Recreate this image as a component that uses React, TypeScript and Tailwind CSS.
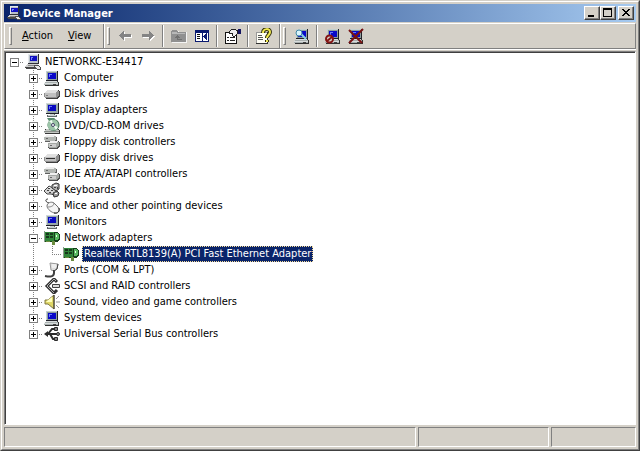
import React from "react";

type IconProps = { size?: number };

const Svg = ({ size = 16, children }: IconProps & { children: React.ReactNode }) => (
  <svg width={size} height={size} viewBox="0 0 16 16" className="block shrink-0" shapeRendering="crispEdges" aria-hidden="true">
    {children}
  </svg>
);

const ComputerShape = () => (
  <>
    <path d="M2 1h12v10H2z" fill="#202028" />
    <path d="M2 1h11v9H2z" fill="#8c9c9c" />
    <path d="M2 1h11v1H3v8H2z" fill="#c4d0d0" />
    <path d="M4 3h8v6H4z" fill="#0808c8" />
    <path d="M5 4h3v1H6v2H5z" fill="#6878f8" />
    <path d="M2 11h12v1h1v4H1v-1H0v-2h1v-1h1z" fill="#303030" />
    <path d="M2 11h11v1h1v3H0v-2h1v-1h1z" fill="#a8b0b0" />
    <path d="M2 11h11v1H2zM0 13h14v1H0z" fill="#d8dcdc" />
    <path d="M9 14h3v1H9z" fill="#404040" />
  </>
);

const ComputerIcon = ({ size }: IconProps) => (
  <Svg size={size}>
    <ComputerShape />
  </Svg>
);

const RootIcon = ({ size }: IconProps) => (
  <Svg size={size}>
    <path d="M3 0h11v10H3z" fill="#303038" />
    <path d="M3 0h10v9H3z" fill="#b8c0c8" />
    <path d="M3 0h10v1H4v8H3z" fill="#e4e8ec" />
    <path d="M5 2h7v5H5z" fill="#1010c0" />
    <path d="M6 3h2v1H7v2H6z" fill="#7888ff" />
    <path d="M2 10h11v1h1v4H1v-1H0v-2h1v-1h1z" fill="#484848" />
    <path d="M2 10h11v1h1v2H0v-1h1v-1h1z" fill="#d0d0d0" />
    <path d="M3 11h8v1H3z" fill="#888" />
    <path d="M9 11h4l3 3v2h-4l-3-3z" fill="#505050" />
    <path d="M10 12h3l2 2v1h-3l-2-2z" fill="#e8e8e8" />
  </Svg>
);

const MonitorIcon = () => (
  <Svg>
    <path d="M2 1h13v11H2z" fill="#202028" />
    <path d="M2 1h12v10H2z" fill="#98a8a8" />
    <path d="M2 1h12v1H3v9H2z" fill="#d0d8d8" />
    <path d="M4 3h8v6H4z" fill="#0808c0" />
    <path d="M5 4h3v1H6v2H5z" fill="#6878f8" />
    <path d="M6 12h5v1h2v2H3v-2h3z" fill="#606868" />
    <path d="M6 12h4v1h2v1H4v-1h2z" fill="#c8d0d0" />
  </Svg>
);

const DriveIcon = ({ floppy = false }: { floppy?: boolean }) => (
  <Svg>
    <path d="M3 4h12v1h1v6h-1v1h-1v1H2v-1H1v-5h1V5h1z" fill="#404040" />
    <path d="M3 4h11v1h1v5h-1v1h-1v1H1v-1H0V7h1V6h1V5h1z" fill="#909090" />
    <path d="M3 4h11v1h-1v1h-1v1H1V6h1V5h1z" fill="#e0e0e0" />
    <path d="M1 7h11v4H1z" fill="#c0c0c0" />
    {floppy ? <path d="M2 8h9v1H2z" fill="#303030" /> : <path d="M2 9h2v1H2z" fill="#808080" />}
  </Svg>
);

const ControllerIcon = () => (
  <Svg>
    <path d="M2 2h10v1h1v4h-1v1H1V7h1z" fill="#606060" />
    <path d="M2 1h9v1h1v4h-1v1H1V6H0V3h1V2h1z" fill="#b4b8b4" />
    <path d="M2 1h9v1h-1v1H1V2h1z" fill="#eee" />
    <path d="M6 7h9v1h1v5h-1v1h-1v1H5v-1H4V9h2z" fill="#505050" />
    <path d="M6 7h8v1h1v4h-1v1h-1v1H5v-1H4V9h1V8h1z" fill="#a4a8a4" />
    <path d="M6 7h8v1h-1v1H5V8h1z" fill="#f0f0f0" />
    <path d="M5 10h7v3H5z" fill="#ccc" />
    <path d="M2 4h2v1H2zM6 11h2v1H6z" fill="#666" />
  </Svg>
);

const DiscIcon = () => (
  <Svg>
    <path d="M1 11h13l2 2v3H1z" fill="#383838" />
    <path d="M2 11h11l2 2v2H0v-2z" fill="#c4c8c4" />
    <path d="M0 13h15v1H0z" fill="#8c908c" />
    <g shapeRendering="auto">
      <path d="M3 0h8l-2 3H5z" fill="#548a6c" />
      <circle cx="9.500" cy="7" r="6" fill="#3f6f53" />
      <circle cx="9" cy="7" r="5.500" fill="#9cc4a8" />
      <path d="M9 7L5 3l3-1zM9 7l5 2-2 3z" fill="#eefcf2" />
      <circle cx="9" cy="7" r="1.500" fill="#fff" stroke="#446" strokeWidth="1" />
    </g>
  </Svg>
);

const KeyboardIcon = () => (
  <Svg>
    <g shapeRendering="auto">
      <path d="M0 9l5-5 4 2 4 4-3 3-3-1-4 0z" fill="#d4d4d4" stroke="#444" />
      <path d="M8 3l4-2 3 1v5l-3 2-4-3z" fill="#b0b0b0" stroke="#333" />
      <path d="M9 11l4-2 2 2-1 3-4 1z" fill="#a0a0a0" stroke="#333" />
    </g>
    <path d="M4 6h2v1H4zM7 8h2v1H7zM3 8h2v1H3zM5 10h2v1H5z" fill="#404040" />
    <path d="M10 3h3v1h-3zM11 11h2v1h-2zM5 5h1v1H5z" fill="#fff" />
    <path d="M10 5h2v1h-2zM13 5h1v2h-1z" fill="#404040" />
  </Svg>
);

const MouseIcon = () => (
  <Svg>
    <g shapeRendering="auto">
      <path d="M5 5C1 4 1 1 4 1" fill="none" stroke="#333" />
      <path d="M3 8c0-3 4-5 7-3l4 4c2 3 1 6-3 6-3 0-8-4-8-7z" fill="#f4f4f4" stroke="#707070" />
      <path d="M4 9c3 0 6-1 6-4" fill="none" stroke="#888" />
      <path d="M15 10c1 3-1 6-5 5" fill="none" stroke="#222" />
    </g>
  </Svg>
);

const NetworkIcon = () => (
  <Svg>
    <path d="M1 2h13v10H1z" fill="#124c18" />
    <path d="M1 2h12v9H1z" fill="#2f8438" />
    <path d="M2 3h3v2H2zM2 6h3v2H2z" fill="#16351a" />
    <path d="M6 3h3v2H6zM6 6h3v2H6z" fill="#183c1c" />
    <path d="M10 2h4v1h1v1h1v6h-1v1h-1v1h-4z" fill="#163c1c" />
    <path d="M11 3h3v1h1v5h-1v1h-3z" fill="#58b860" />
    <path d="M12 5h1v2h-1z" fill="#e0ffe0" />
    <path d="M2 11h4v1H2zM8 11h3v4H8z" fill="#6c8c40" />
    <path d="M0 1h1v11H0z" fill="#8c9c8c" />
  </Svg>
);

const PortIcon = () => (
  <Svg>
    <g shapeRendering="auto">
      <path d="M6 1l8 1-1 5-3 2-3-1z" fill="#ddd" stroke="#999" />
      <path d="M8 3h4M8 5h4" stroke="#fff" />
      <path d="M10 8v3c0 4-4 4-9 3" fill="none" stroke="#404040" strokeWidth="2" />
      <path d="M14 2l-1 5-3 2" fill="none" stroke="#444" />
    </g>
  </Svg>
);

const ScsiIcon = () => (
  <Svg>
    <g shapeRendering="auto">
      <path d="M13 4l-3-3-7 7 7 7 3-3" fill="none" stroke="#303030" strokeWidth="3" />
      <path d="M12 3l-2-2-7 7 7 7" fill="none" stroke="#b0b0b0" />
      <path d="M8.500 6.500h7v3h-7z" fill="#ddd" stroke="#404040" />
    </g>
  </Svg>
);

const SoundIcon = () => (
  <Svg>
    <g shapeRendering="auto">
      <path d="M1 6h3l6-5v14l-6-5H1z" fill="#e0d868" stroke="#807840" />
      <path d="M4 6l4-3v5H2z" fill="#ffffbc" />
      <path d="M10 1v14" stroke="#333" />
      <path d="M12 5l3-3M12 8h4M12 11l3 3" stroke="#999" />
    </g>
  </Svg>
);

const UsbIcon = () => (
  <Svg>
    <g shapeRendering="auto">
      <path d="M2 8h11M4 8l4-5h4M6 8l3 5h3" fill="none" stroke="#2c2c2c" strokeWidth="2" />
      <path d="M0 8l4-3v6z" fill="#2c2c2c" />
      <path d="M10.500 1.500h3v3h-3zM10.500 11.500h3v3h-3z" fill="#888" stroke="#2c2c2c" />
      <circle cx="14" cy="8" r="1.500" fill="#888" stroke="#2c2c2c" />
    </g>
  </Svg>
);

const ArrowIcon = ({ right = false }: { right?: boolean }) => (
  <Svg>
    {right ? (
      <>
        <path d="M3 7h7V4h1v1h1v1h1v1h1v1h1v1h-1v1h-1v1h-1v1h-1v1h-1v-3H3z" fill="#fff" />
        <path d="M2 6h7V3h1v1h1v1h1v1h1v1h1v1h-1v1h-1v1h-1v1h-1v1H9V9H2z" fill="#848484" />
      </>
    ) : (
      <>
        <path d="M15 7H8V4H7v1H6v1H5v1H4v1H3v1h1v1h1v1h1v1h1v1h1v-3h7z" fill="#fff" />
        <path d="M14 6H7V3H6v1H5v1H4v1H3v1H2v1h1v1h1v1h1v1h1v1h1V9h7z" fill="#848484" />
      </>
    )}
  </Svg>
);

const FolderIcon = () => (
  <Svg>
    <path d="M1 4h1V3h5l1 1h8v11H1z" fill="#f4f4f4" />
    <path d="M0 3h1V2h5v1h1v1h8v10H0z" fill="#909090" />
    <path d="M1 4h5v1h8v1H1z" fill="#b8b8b8" />
    <path d="M6 7h1v1h1v1h1v1H7v1h4v1H6v-2H4V9h1V8h1z" fill="#707070" />
  </Svg>
);

const PaneIcon = () => (
  <Svg>
    <path d="M1 2h14v12H1z" fill="#0a1a70" />
    <path d="M2 5h6v8H2zM9 5h5v8H9z" fill="#fff" />
    <path d="M3 6h3v1H3zM3 8h3v1H3zM3 10h3v1H3z" fill="#111" />
    <path d="M13 5v7L9 9V8z" fill="#0a1a70" />
  </Svg>
);

const PropertiesIcon = () => (
  <Svg>
    <path d="M0 4h12v12H0z" fill="#111" />
    <path d="M1 5h10v10H1z" fill="#fff" />
    <path d="M2 9h2v1H2zM5 9h5v1H5zM2 12h2v1H2zM5 12h5v1H5z" fill="#222" />
    <path d="M4 3h1V2h1V1h5v1h2v4h-1v1h-1v1h-1v1H8V8H7V6H4z" fill="#222" />
    <path d="M5 3h1V2h5v1h1v3h-1v1h-1v1H8V5H5z" fill="#eee" />
    <path d="M13 1h3v5h-3z" fill="#141460" />
  </Svg>
);

const HelpIcon = () => (
  <Svg>
    <path d="M0 4h12v12H0z" fill="#333" />
    <path d="M0 4h11v11H0z" fill="#999" />
    <path d="M1 5h10v10H1z" fill="#fffef4" />
    <path d="M2 7h4v1H2zM2 9h5v1H2zM2 11h5v1H2z" fill="#555" />
    <g shapeRendering="auto">
      <path d="M7 5c0-5 7-5 7-1 0 3-3 3-3 6M11 12v2" fill="none" stroke="#33300c" strokeWidth="4" />
      <path d="M7 5c0-5 7-5 7-1 0 3-3 3-3 6M11 12v2" fill="none" stroke="#f0e850" strokeWidth="2" />
    </g>
  </Svg>
);

const ScanIcon = () => (
  <Svg>
    <ComputerShape />
    <g shapeRendering="auto">
      <path d="M7 6l5 5" stroke="#88d0e8" strokeWidth="2" />
      <circle cx="5" cy="5" r="3" fill="#d8f4fc" stroke="#4088a8" />
    </g>
  </Svg>
);

const DisableIcon = () => (
  <Svg>
    <ComputerShape />
    <g shapeRendering="auto">
      <circle cx="4.500" cy="11" r="3.500" fill="#d4d0c8" stroke="#841414" strokeWidth="2" />
      <path d="M2 13l5-4" stroke="#841414" strokeWidth="2" />
    </g>
  </Svg>
);

const UninstallIcon = () => (
  <Svg>
    <ComputerShape />
    <path d="M1 2l13 13M15 1L1 15" stroke="#781010" strokeWidth="2" shapeRendering="auto" />
  </Svg>
);

const devices = [
  { label: "Computer", icon: <ComputerIcon /> },
  { label: "Disk drives", icon: <DriveIcon /> },
  { label: "Display adapters", icon: <MonitorIcon /> },
  { label: "DVD/CD-ROM drives", icon: <DiscIcon /> },
  { label: "Floppy disk controllers", icon: <ControllerIcon /> },
  { label: "Floppy disk drives", icon: <DriveIcon floppy /> },
  { label: "IDE ATA/ATAPI controllers", icon: <ControllerIcon /> },
  { label: "Keyboards", icon: <KeyboardIcon /> },
  { label: "Mice and other pointing devices", icon: <MouseIcon /> },
  { label: "Monitors", icon: <MonitorIcon /> },
  {
    label: "Network adapters",
    icon: <NetworkIcon />,
    children: [{ label: "Realtek RTL8139(A) PCI Fast Ethernet Adapter", icon: <NetworkIcon /> }],
  },
  { label: "Ports (COM & LPT)", icon: <PortIcon /> },
  { label: "SCSI and RAID controllers", icon: <ScsiIcon /> },
  { label: "Sound, video and game controllers", icon: <SoundIcon /> },
  { label: "System devices", icon: <ComputerIcon /> },
  { label: "Universal Serial Bus controllers", icon: <UsbIcon /> },
];

// Dotted connector: "full" runs through the row, "half" stops at its middle
const Connector = ({ vertical, horizontal = true }: { vertical: "full" | "half" | "none"; horizontal?: boolean }) => (
  <svg width="19" height="16" viewBox="0 0 19 16" className="block" shapeRendering="crispEdges" aria-hidden="true">
    {vertical !== "none" && (
      <path d={vertical === "full" ? "M9.500 0v16" : "M9.500 0v9"} stroke="#808080" strokeDasharray="1 1" />
    )}
    {horizontal && <path d="M9 8.500h10" stroke="#808080" strokeDasharray="1 1" />}
  </svg>
);

const Expander = ({ open, label, vertical }: { open: boolean; label: string; vertical: "full" | "half" | "none" }) => (
  <span className="grid h-4 w-[19px] shrink-0 place-items-center *:[grid-area:1/1]">
    <Connector vertical={vertical} />
    <button type="button" aria-label={`${open ? "Collapse" : "Expand"} ${label}`} className="size-[9px] border border-[#808080] bg-white">
      <svg width="7" height="7" viewBox="0 0 7 7" className="block" shapeRendering="crispEdges" aria-hidden="true">
        <path d={open ? "M1 3h5v1H1z" : "M1 3h5v1H1zM3 1h1v5H3z"} fill="#000" />
      </svg>
    </button>
  </span>
);

const Label = ({ icon, selected = false, children }: { icon: React.ReactNode; selected?: boolean; children: React.ReactNode }) => (
  <>
    <span className="flex w-[19px] shrink-0 pl-px">{icon}</span>
    <span
      className={
        selected
          ? "ml-px h-4 whitespace-nowrap border border-dotted border-[#f5db95] bg-[#0a246a] px-px leading-[14px] text-white"
          : "whitespace-nowrap px-0.5 leading-4"
      }
    >
      {children}
    </span>
  </>
);

const ToolButton = ({ label, disabled, children }: { label: string; disabled?: boolean; children: React.ReactNode }) => (
  <button type="button" aria-label={label} disabled={disabled} className="flex h-[22px] w-[23px] items-center justify-center">
    {children}
  </button>
);

const Separator = () => <span className="mx-[3px] h-[22px] w-0.5 border-l border-[#808080] border-r border-r-white" />;

const Grip = () => <span className="h-[18px] w-[3px] border border-white border-r-[#808080] border-b-[#808080]" />;

const CaptionButton = ({ label, children }: { label: string; children: React.ReactNode }) => (
  <button
    type="button"
    aria-label={label}
    className="h-3.5 w-4 border border-white border-r-[#404040] border-b-[#404040] bg-[#d4d0c8] shadow-[inset_-1px_-1px_0_#808080]"
  >
    <svg width="14" height="12" viewBox="0 0 14 12" className="block" shapeRendering="crispEdges" aria-hidden="true">
      {children}
    </svg>
  </button>
);

export default function App() {
  return (
    <main className="flex min-h-screen flex-col border border-[#d4d0c8] border-r-[#404040] border-b-[#404040] bg-[#d4d0c8] font-['Tahoma','DejaVu_Sans_Condensed','DejaVu_Sans',sans-serif] text-[11px] text-black">
      <div className="flex grow flex-col border border-white border-r-[#808080] border-b-[#808080] p-0.5">
        <header className="flex h-[18px] items-center bg-linear-to-r from-[#0a246a] to-[#a6caf0] pr-0.5 pl-[3px]">
          <RootIcon size={14} />
          <h1 className="grow pt-0.5 pl-0.5 font-bold text-white">Device Manager</h1>
          <CaptionButton label="Minimize">
            <path d="M3 8h6v2H3z" />
          </CaptionButton>
          <CaptionButton label="Maximize">
            <path d="M2 1h9v9H2zM3 3v6h7V3z" fillRule="evenodd" />
          </CaptionButton>
          <span className="w-0.5" />
          <CaptionButton label="Close">
            <path d="M3 2h2v1h1v1h2V3h1V2h2v1h-1v1H9v1H8v1h1v1h1v1h1v1H9V8H8V7H6v1H5v1H3V8h1V7h1V6h1V5H5V4H4V3H3z" />
          </CaptionButton>
        </header>

        <div className="mt-px mb-0.5 flex h-[26px] items-center border border-[#808080] border-t-white border-l-white pl-1 shadow-[0_1px_0_#fff]">
          <Grip />
          <nav className="flex w-[91px] gap-[15px] pl-2.5">
            <button type="button">
              <u>A</u>ction
            </button>
            <button type="button">
              <u>V</u>iew
            </button>
          </nav>
          <span className="mr-0.5 h-6 w-0.5 border-r border-l border-[#808080] border-r-white" />
          <Grip />
          <div className="flex items-center pl-[3px]">
            <ToolButton label="Back" disabled>
              <ArrowIcon />
            </ToolButton>
            <ToolButton label="Forward" disabled>
              <ArrowIcon right />
            </ToolButton>
            <Separator />
            <ToolButton label="Up one level" disabled>
              <FolderIcon />
            </ToolButton>
            <ToolButton label="Show/Hide console tree">
              <PaneIcon />
            </ToolButton>
            <Separator />
            <ToolButton label="Properties">
              <PropertiesIcon />
            </ToolButton>
            <Separator />
            <ToolButton label="Help">
              <HelpIcon />
            </ToolButton>
          </div>
          <span className="mr-0.5 ml-1 h-6 w-0.5 border-r border-l border-[#808080] border-r-white" />
          <Grip />
          <div className="flex items-center pl-1">
            <ToolButton label="Scan for hardware changes">
              <ScanIcon />
            </ToolButton>
            <Separator />
            <ToolButton label="Disable">
              <DisableIcon />
            </ToolButton>
            <ToolButton label="Uninstall">
              <UninstallIcon />
            </ToolButton>
          </div>
        </div>

        <section className="grow border border-[#808080] border-r-white border-b-white bg-white pt-0.5 shadow-[inset_1px_1px_0_#404040]">
          <div className="flex items-center">
            <Expander open label="NETWORKC-E34417" vertical="none" />
            <Label icon={<RootIcon />}>NETWORKC-E34417</Label>
          </div>
          <ul className="pl-[19px]">
            {devices.map((device, index) => (
              <li key={device.label}>
                <div className="flex items-center">
                  <Expander open={!!device.children} label={device.label} vertical={index === devices.length - 1 ? "half" : "full"} />
                  <Label icon={device.icon}>{device.label}</Label>
                </div>
                {device.children && (
                  <ul>
                    {device.children.map((child) => (
                      <li key={child.label} className="flex items-center">
                        <Connector vertical="full" horizontal={false} />
                        <Connector vertical="half" />
                        <Label icon={child.icon} selected>
                          {child.label}
                        </Label>
                      </li>
                    ))}
                  </ul>
                )}
              </li>
            ))}
          </ul>
        </section>

        <footer className="mt-0.5 flex h-5 gap-0.5">
          <span className="grow border border-[#808080] border-r-white border-b-white" />
          <span className="w-[131px] border border-[#808080] border-r-white border-b-white" />
          <span className="w-[85px] border border-[#808080] border-r-white border-b-white" />
        </footer>
      </div>
    </main>
  );
}
